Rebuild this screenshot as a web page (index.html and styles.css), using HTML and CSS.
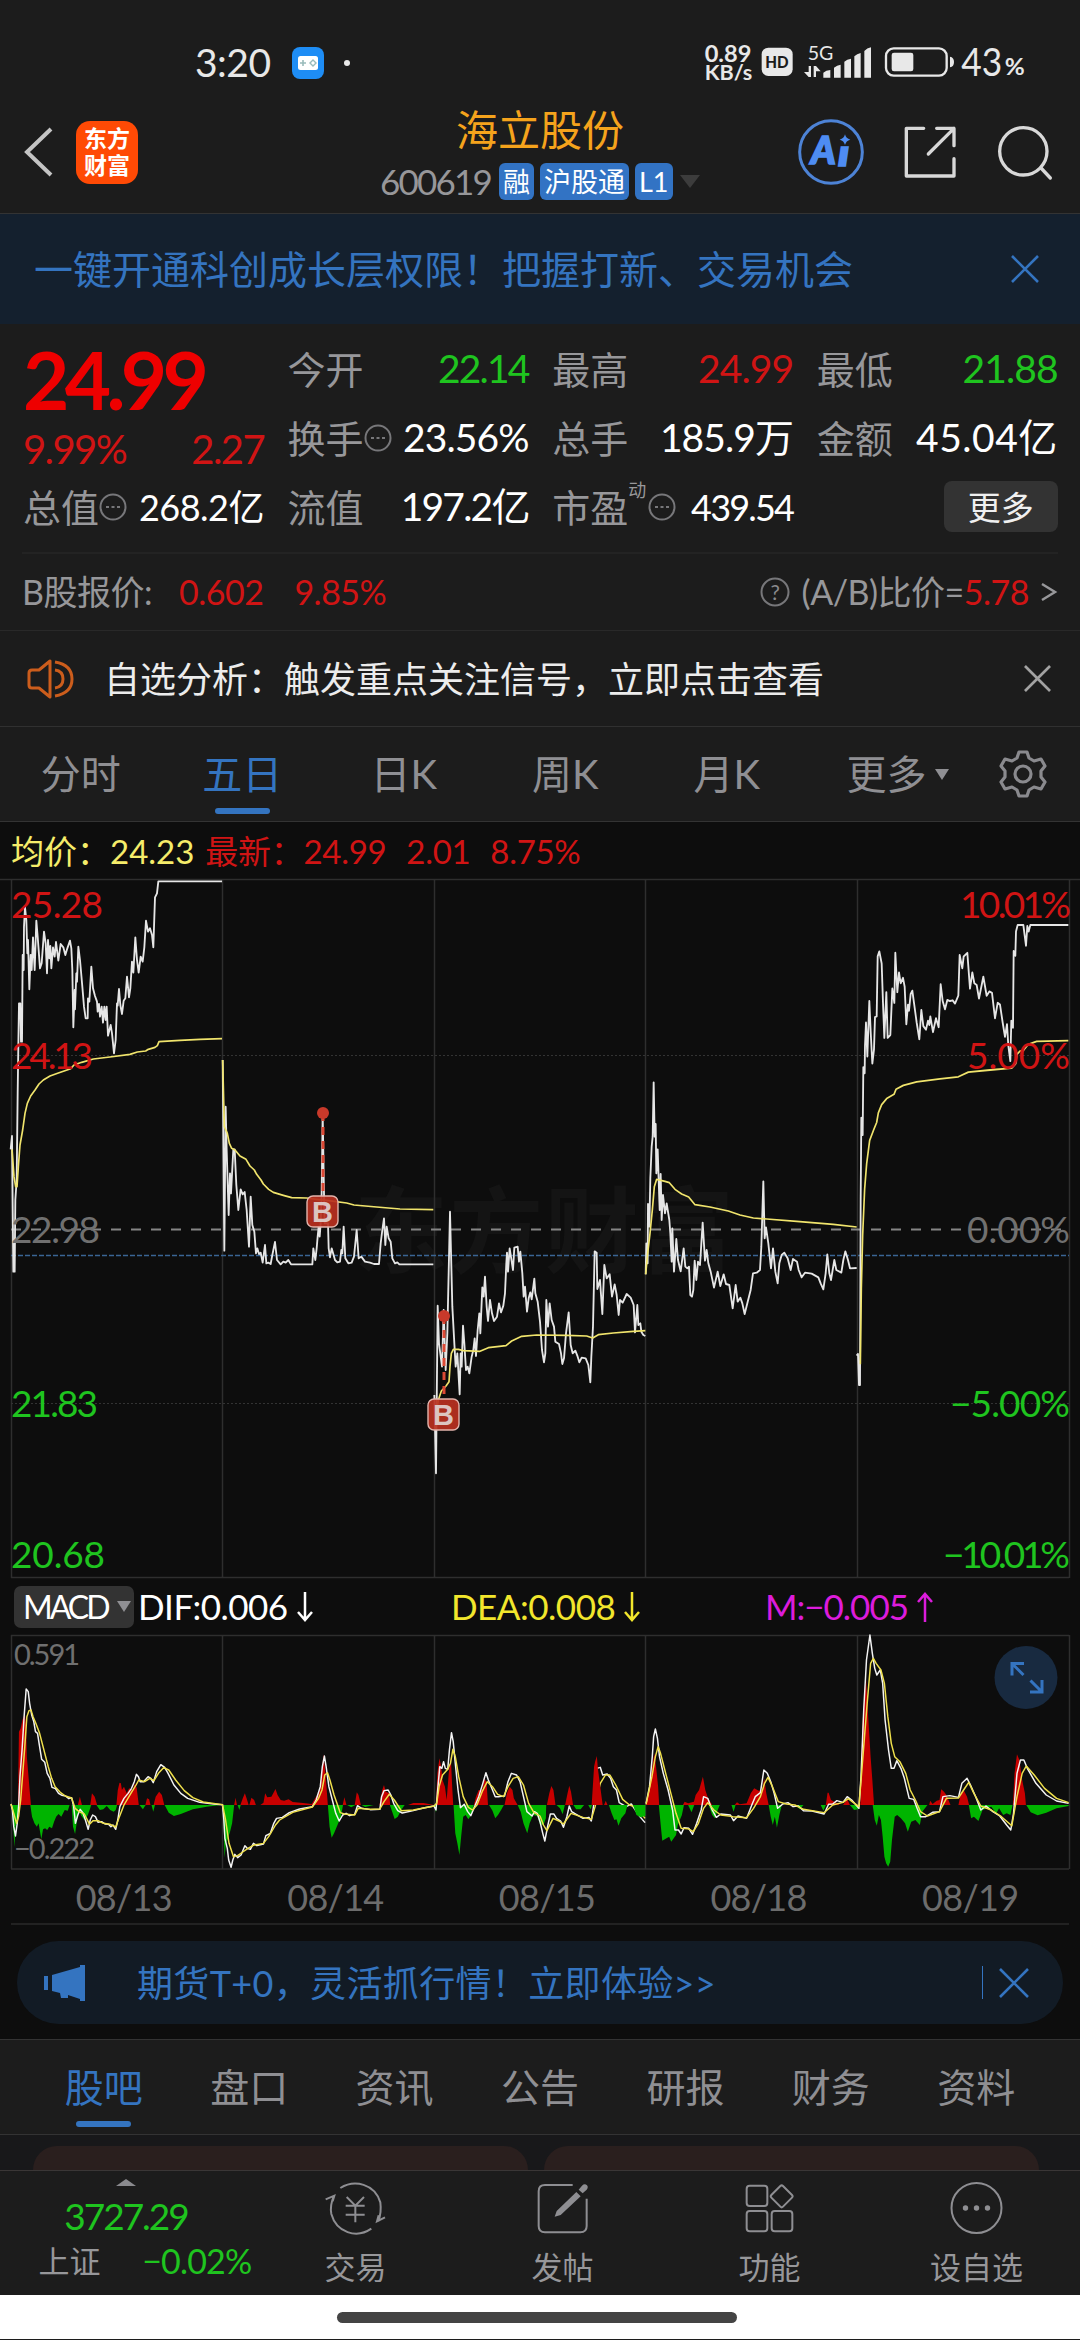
FILE: index.html
```html
<!DOCTYPE html>
<html lang="zh-CN">
<head>
<meta charset="utf-8">
<title>海立股份 600619</title>
<link rel="stylesheet" href="styles.css">
</head>
<body>
<header class="top">
  <div class="status">
    <span class="clock">3:20</span>
    <svg class="game" viewBox="0 0 32 32"><rect width="32" height="32" rx="8" fill="#1e8df5"/><rect x="6" y="9" width="20" height="14" rx="2.5" fill="#fff"/><path d="M8 16h6M11 13v6" stroke="#9bb" stroke-width="1.6"/><path d="M21 13l3 3-3 3-3-3z" fill="none" stroke="#9bb" stroke-width="1.4"/></svg>
    <i class="dot"></i>
    <svg class="signals" viewBox="120 60 990 135" fill="#e8e8e8">
      <text x="134" y="127" font-size="66" font-weight="700" textLength="140" lengthAdjust="spacingAndGlyphs">0.89</text>
      <text x="134" y="181" font-size="60" font-weight="700" textLength="143" lengthAdjust="spacingAndGlyphs">KB/s</text>
      <rect x="305" y="83" width="93" height="85" rx="20"/>
      <text x="316" y="143" font-size="49" font-weight="900" fill="#1c1c1c" textLength="70" lengthAdjust="spacingAndGlyphs">HD</text>
      <text x="443" y="120" font-size="60" textLength="77" lengthAdjust="spacingAndGlyphs">5G</text>
      <path d="M446 138h7v33h-7l-14-15h14zM461 171v-33h7l14 16h-14v17zM490 173v-15q8-8 21-8v23zM522 173v-30q9-8 20-9v39zM553 173v-48q8-8 20-9v57zM583 173v-64q8-8 19-10v74zM613 173v-80q8-9 20-11v91z"/>
      <rect x="678" y="85" width="182" height="82" rx="23" fill="none" stroke="#e8e8e8" stroke-width="7"/>
      <rect x="695" y="98" width="65" height="56" rx="7"/>
      <path d="M870 110q12 2 12 16t-12 16z"/>
      <text x="904" y="168" font-size="115" textLength="123" lengthAdjust="spacingAndGlyphs">43</text>
      <text x="1034" y="164" font-size="67" font-weight="700" textLength="60" lengthAdjust="spacingAndGlyphs">%</text>
    </svg>
  </div>
  <div class="nav">
    <svg class="back" viewBox="0 0 32 52"><path d="M28 3L4 26l24 23" fill="none" stroke="#c4c4c4" stroke-width="4"/></svg>
    <div class="logo">东方<br>财富</div>
    <div class="title">
      <h1>海立股份</h1>
      <div class="sub"><span class="code">600619</span><b>融</b><b>沪股通</b><b>L1</b><i></i></div>
    </div>
    <svg class="ai" viewBox="408 291 210 210"><circle cx="513" cy="396" r="94" fill="none" stroke="#4d83d6" stroke-width="9"/><g fill="#4e8cf2" stroke="#4e8cf2" stroke-width="5" font-weight="900" font-style="italic"><text x="453" y="432" font-size="112" textLength="74" lengthAdjust="spacingAndGlyphs">A</text><text x="534" y="437" font-size="108" textLength="34" lengthAdjust="spacingAndGlyphs">ı</text></g><path d="M555 343q3 13 16 16-13 3-16 16-3-13-16-16 13-3 16-16z" fill="#4e8cf2"/></svg>
    <svg class="share" viewBox="720 305 180 180" fill="none" stroke="#d8d8d8" stroke-width="10" stroke-linecap="round" stroke-linejoin="round"><path d="M791 324h-52v143h143v-52M830 324h52v52M882 324l-77 77"/></svg>
    <svg class="search" viewBox="1005 300 180 180" fill="none" stroke="#d8d8d8" stroke-width="10" stroke-linecap="round"><circle cx="1090" cy="388" r="71"/><path d="M1143 438l28 30"/></svg>
  </div>
</header>

<section class="promo"><span>一键开通科创成长层权限！把握打新、交易机会</span><svg viewBox="0 0 28 28"><path d="M1 1l26 26M27 1L1 27" stroke="#3474c0" stroke-width="2.6"/></svg></section>

<section class="quote">
  <div class="grid">
    <div class="price">
      <strong>24.99</strong>
      <div class="chg"><span>9.99%</span><span>2.27</span></div>
    </div>
    <div class="cell"><label>今开</label><em class="g">22.14</em></div>
    <div class="cell"><label>最高</label><em class="r mid">24.99</em></div>
    <div class="cell"><label>最低</label><em class="g mid">21.88</em></div>
    <div class="cell"><label>换手</label><svg class="more" viewBox="0 0 28 28"><circle cx="14" cy="14" r="12.5"/><path d="M7 14h3M12.500 14h3M18 14h3"/></svg><em class="mid">23.56%</em></div>
    <div class="cell"><label>总手</label><em class="mid">185.9万</em></div>
    <div class="cell"><label>金额</label><em class="wide">45.04亿</em></div>
    <div class="cell"><label>总值</label><svg class="more" viewBox="0 0 28 28"><circle cx="14" cy="14" r="12.5"/><path d="M7 14h3M12.500 14h3M18 14h3"/></svg><em class="sm loose">268.2亿</em></div>
    <div class="cell"><label>流值</label><em>197.2亿</em></div>
    <div class="cell"><label>市盈</label><sup>动</sup><svg class="more" viewBox="0 0 28 28"><circle cx="14" cy="14" r="12.5"/><path d="M7 14h3M12.500 14h3M18 14h3"/></svg><em class="sm">439.54</em></div>
    <div class="cell"><button>更多</button></div>
  </div>
  <div class="bshare">
    <span>B股报价:</span><span class="r b1">0.602</span><span class="r b2">9.85%</span>
    <svg class="help" viewBox="0 0 30 30"><circle cx="15" cy="15" r="13.500" fill="none" stroke="#77777a" stroke-width="2"/><text x="15" y="22.500" text-anchor="middle" font-size="21" fill="#8a8a8d">?</text></svg>
    <span class="ab">(A/B)比价=<span class="r">5.78</span></span>
    <svg class="chev" viewBox="0 0 16 18"><path d="M1 1l13 8-13 8" fill="none" stroke="#97979a" stroke-width="2.500"/></svg>
  </div>
</section>

<section class="notice">
  <svg class="horn" viewBox="0 0 48 40" fill="none" stroke="#cc5d1c" stroke-width="3" stroke-linejoin="round"><path d="M23 2v36l-11-9H5q-3 0-3-3V14q0-3 3-3h7zM28 3q17 3 17 17T28 37M28 11q8 1 8 9t-8 9"/></svg>
  <span>自选分析：触发重点关注信号，立即点击查看</span>
  <svg class="x" viewBox="0 0 28 28"><path d="M1 1l26 26M27 1L1 27" stroke="#a2a2a2" stroke-width="2.800"/></svg>
</section>

<nav class="tabs periods">
  <a>分时</a><a class="on">五日</a><a>日K</a><a>周K</a><a>月K</a><a>更多<i></i></a>
  <svg class="gear" viewBox="0 0 48 48" fill="none" stroke="#8a8a8e" stroke-width="3.200" stroke-linejoin="round"><path d="M20 2h8l2 6 5 3 7-2 4 7-4 5v6l4 5-4 7-7-2-5 3-2 6h-8l-2-6-5-3-7 2-4-7 4-5v-6l-4-5 4-7 7 2 5-3z"/><circle cx="24" cy="24" r="8"/></svg>
</nav>

<section class="chart">
  <div class="legend"><span class="y">均价：24.23</span><span class="r">最新：24.99</span><span class="r">2.01</span><span class="r">8.75%</span></div>
  <svg class="plot" viewBox="0 879 1080 699">
    <text class="mark" x="354" y="1266" textLength="380">东方财富</text>
    <g class="frame"><path d="M0 879.500H1080M11 1577.500H1069M11.500 880V1578M222.500 880V1578M434.500 880V1578M645.500 880V1578M857.500 880V1578M1069.500 880V1578"/></g>
    <path d="M11 1055.500H1069M11 1403.500H1069" stroke="#333" stroke-dasharray="2 2"/>
    <path d="M11 1229.500H1069" stroke="#858585" stroke-width="1.800" stroke-dasharray="10 10"/>
    <path d="M11 1255.500H1069" stroke="#3a6594" stroke-width="1.400" stroke-dasharray="5 2"/>
    <g class="white" transform="translate(0 860) scale(.33333)">
      <polyline points="32,868 36,828 40,1235 44,1235 46,1020 50,960 53,700 55,560 57,430 61,430 63,545 66,545 68,285 71,330 72,200 75,142 79,180 82,280 84,240 88,388 92,285 95,330 99,232 104,330 109,182 113,230 120,325 125,310 132,215 137,250 141,340 144,240 148,295 151,258 154,325 159,262 164,290 168,246 175,302 182,252 190,262 196,285 202,265 210,242 214,265 217,330 220,502 224,390 225,448 229,340 231,365 235,260 240,300 247,380 252,440 257,475 263,475 264,415 268,425 274,320 279,385 285,408 291,425 293,455 297,432 300,470 305,440 309,488 313,440 317,480 320,440 324,527 332,495 336,520 342,580 347,540 351,430 353,437 357,387 361,435 366,462 371,422 376,415 381,350 387,412 391,385 396,305 400,338 406,232 411,300 416,338 422,290 428,305 433,262 438,182 444,215 450,205 456,225 460,262 465,112 471,100 475,64 666,64"/>
      <polyline points="668,600 673,1172 677,740 680,870 686,1065 690,940 693,1000 700,868 704,868 709,975 715,1050 722,988 728,1003 734,996 740,1050 747,1160 752,1010 757,1095 763,1115 768,1180 772,1165 777,1182 782,1178 788,1208 795,1155 799,1210 805,1208 812,1212 817,1185 825,1146 831,1200 842,1213 850,1205 857,1208 865,1200 873,1213 937,1213 940,1165 946,1200 950,1165 953,1130 956,1100 959,1130 962,1090 965,1000 968,760 972,1000 974,1090 984,1090 986,1165 990,1192 995,1165 1005,1200 1012,1207 1020,1205 1024,1170 1027,1180 1031,1100 1036,1195 1045,1210 1055,1208 1062,1190 1070,1110 1076,1195 1084,1190 1095,1205 1110,1208 1122,1212 1137,1212 1142,1150 1147,1110 1152,1075 1156,1155 1160,1100 1166,1135 1172,1145 1177,1195 1185,1210 1192,1207 1198,1213 1300,1213"/>
    </g>
    <g class="white" transform="translate(420 1060) scale(.33333)">
      <polyline points="43,1005 48,1240 53,737 57,850 66,920 71,750 77,930 82,820 90,455 97,740 103,850 107,920 112,880 119,1003 122,880 125,920 129,797 133,850 138,930 143,920 148,940 155,890 160,870 164,835 168,888 173,810 178,760 181,820 187,682 191,710 195,650 200,740 204,783 210,720 216,760 222,783 231,770 237,730 243,757 250,737 255,700 259,610 261,578 264,635 269,565 279,630 283,563 293,560 297,605 301,575 307,640 311,710 315,680 321,755 326,715 331,697 335,718 343,656 346,700 353,725 360,785 366,870 372,907 376,880 379,720 384,800 389,730 395,780 402,800 406,845 417,852 423,880 427,912 432,895 438,820 446,757 452,855 458,880 466,872 473,890 478,907 485,893 497,895 505,915 511,967 514,890 519,800 524,574 530,578 532,687 540,660 547,762 553,615 560,655 569,643 576,710 584,673 590,705 596,765 600,720 608,728 620,702 632,713 641,735 645,817 652,735 655,795 661,790 664,815 670,825 676,828"/>
      <polyline points="677,643 679,550 683,610 684,432 688,500 691,355 695,260 698,230 701,67 704,230 707,192 709,340 713,268 719,450 722,342 725,480 729,405 735,460 740,430 748,480 751,520 755,605 757,505 762,635 769,537 774,600 782,634 791,565 796,620 802,625 807,620 811,705 816,710 820,690 824,602 829,660 834,605 840,615 848,488 855,602 860,570 865,610 872,635 882,683 893,635 901,678 911,643 918,672 928,675 938,745 947,675 953,725 961,713 967,730 974,762 982,730 992,690 999,640 1010,638 1020,630 1024,560 1030,364 1034,535 1038,502 1045,550 1053,625 1059,565 1066,635 1073,670 1078,610 1085,585 1093,578 1103,595 1112,630 1119,597 1131,605 1136,630 1145,652 1155,638 1175,641 1195,652 1202,670 1210,688 1217,640 1222,583 1228,640 1233,660 1243,600 1249,630 1264,638 1270,600 1276,574 1284,600 1290,625 1310,624"/>
    </g>
    <g class="white" transform="translate(640 860) scale(.33333 .35714)">
      <polyline points="650,1388 654,1383 657,1470 660,1470 662,950 664,722 668,770 670,580 674,597 675,520 678,455 682,550 688,395 692,480 697,570 702,530 705,440 710,438 713,270 718,256 725,290 729,400 733,498 739,370 743,498 751,490 757,360 763,400 766,260 772,370 777,315 782,345 789,330 794,355 799,460 804,405 807,422 812,375 817,366 822,400 830,455 838,502 844,420 850,465 858,475 864,450 868,462 871,438 879,482 888,443 896,468 902,348 908,395 915,418 922,392 930,395 938,393 945,402 955,380 959,266 967,303 971,270 982,260 990,360 997,315 1003,345 1010,350 1017,388 1030,327 1040,380 1048,368 1056,372 1065,443 1073,400 1080,405 1088,455 1095,495 1101,460 1105,520 1111,563 1114,450 1119,470 1121,255 1126,268 1128,200 1133,182 1150,182 1158,240 1162,185 1166,200 1171,182 1285,182"/>
    </g>
    <g class="avg" transform="translate(0 860) scale(.33333)">
      <polyline points="36,868 42,950 47,980 51,980 55,920 60,855 68,810 75,760 82,730 92,708 105,690 117,672 130,660 150,648 175,639 212,626 222,615 245,607 280,597 330,591 390,583 412,576 437,573 445,568 465,562 472,557 477,545 540,541 600,538 666,536"/>
      <polyline points="668,600 673,800 682,820 688,850 695,865 705,870 720,888 738,898 750,918 763,930 770,943 783,960 790,972 806,988 820,997 850,1006 875,1013 920,1014 950,1018 985,1022 1040,1029 1062,1035 1130,1041 1200,1047 1300,1049"/>
    </g>
    <g class="avg" transform="translate(420 1060) scale(.33333)">
      <polyline points="46,1080 55,1020 64,993 78,978 87,965 90,920 94,880 100,868 115,868 130,872 180,874 205,863 258,857 275,843 305,829 350,825 440,826 500,828 518,834 535,824 580,819 640,814 676,812"/>
      <polyline points="677,643 683,580 690,520 697,450 703,380 710,358 735,364 748,368 765,388 785,402 806,411 825,434 870,441 925,453 960,465 1000,474 1040,477 1130,484 1240,493 1310,501"/>
    </g>
    <g class="avg" transform="translate(640 860) scale(.33333 .35714)">
      <polyline points="661,1412 664,1200 668,1050 674,920 680,850 689,785 700,758 710,735 715,708 725,685 740,668 762,656 768,642 790,631 830,621 900,613 955,607 985,594 1050,588 1115,583 1127,570 1130,545 1140,535 1150,533 1165,516 1190,508 1285,506"/>
    </g>
    <g class="buy">
      <path d="M323 1113V1195M444 1316V1396"/><circle cx="323" cy="1113" r="6"/><circle cx="444" cy="1316" r="6"/>
      <rect x="307" y="1196" width="31" height="31" rx="6"/><rect x="428" y="1399" width="31" height="31" rx="6"/>
      <text x="322.500" y="1222">B</text><text x="443.500" y="1425">B</text>
    </g>
    <g class="axis">
      <text class="r" x="11" y="918" textLength="92">25.28</text><text class="r" x="11" y="1069" textLength="82">24.13</text>
      <text class="n" x="11" y="1243" textLength="89">22.98</text><text class="g" x="11" y="1417" textLength="87">21.83</text><text class="g" x="11" y="1568" textLength="94">20.68</text>
      <text class="r" x="960" y="918" textLength="111">10.01%</text><text class="r" x="967" y="1069" textLength="103">5.00%</text>
      <text class="n" x="967" y="1243" textLength="103">0.00%</text><text class="g" x="950" y="1417" textLength="120">−5.00%</text><text class="g" x="943" y="1568" textLength="127">−10.01%</text>
    </g>
  </svg>
  <div class="indicator">
    <span class="pick">MACD<i></i></span>
    <span class="dif">DIF:0.006<svg viewBox="0 0 16 30"><path d="M8 0v28M1 20l7 8 7-8"/></svg></span>
    <span class="dea">DEA:0.008<svg viewBox="0 0 16 30"><path d="M8 0v28M1 20l7 8 7-8"/></svg></span>
    <span class="m">M:−0.005<svg viewBox="0 0 16 30"><path d="M8 30V2M1 10l7-8 7 8"/></svg></span>
  </div>
  <svg class="macd" viewBox="0 1635 1080 235">
    <g class="frame"><path d="M11 1635.500H1069M11 1869H1069M11.500 1635V1869M222.500 1635V1869M434.500 1635V1869M645.500 1635V1869M857.500 1635V1869M1069.500 1635V1869"/></g>
    <g transform="translate(0 1560) scale(.34439 .33333)">
      <path class="up" d="M52,735 55,515 60,505 65,480 72,462 76,500 78,590 82,640 86,690 90,735zM226,735 232,710 238,735zM262,735 267,700 275,710 282,735zM338,735 342,690 347,668 351,670 354,690 360,680 368,700 375,685 385,690 392,670 397,685 403,735zM422,735 427,715 433,718 437,735zM446,735 452,710 462,695 470,705 477,735zM680,735 684,713 688,735zM698,735 705,715 711,700 716,715 722,735zM724,735 730,713 738,720 743,735zM756,735 765,728 770,700 776,712 788,710 800,687 806,705 815,720 825,722 838,718 850,726 880,729 905,732 915,715 925,700 932,670 939,583 945,640 952,735zM995,735 1000,712 1006,735zM1030,735 1036,697 1041,705 1048,735zM1102,735 1110,690 1115,675 1120,695 1130,700 1133,735zM1185,735 1200,729 1230,729 1260,735zM1266,735 1270,640 1276,595 1281,620 1285,660 1292,680 1297,720 1303,640 1309,590 1313,680 1316,735zM1376,735 1382,710 1390,690 1400,690 1407,655 1413,670 1417,735zM1465,735 1472,700 1480,680 1488,690 1492,715 1503,735z"/>
      <path class="dn" d="M34,735 38,790 42,862 45,800 52,770 54,735zM88,735 93,770 100,790 107,800 112,790 120,838 125,808 131,805 137,810 143,800 151,805 157,785 163,770 170,762 178,770 188,750 197,752 202,735zM208,735 212,800 218,822 224,780 228,745 235,765 245,780 255,765 262,745 265,735zM280,735 290,750 300,748 310,738 320,750 330,755 336,750 340,735zM405,735 415,748 423,735zM440,735 445,755 450,735zM478,735 490,758 505,768 525,762 560,748 600,740 640,735zM648,735 652,893 656,850 660,840 668,815 674,790 680,735zM690,735 695,750 699,735zM952,735 957,800 963,833 970,820 980,795 990,770 996,735zM1008,735 1020,742 1032,735zM1050,735 1060,741 1085,735zM1132,735 1137,750 1146,777 1155,770 1165,750 1175,735zM1262,735 1266,758 1268,735zM1317,735 1322,820 1328,850 1334,885 1339,830 1345,770 1352,765 1360,778 1368,765 1376,735zM1420,735 1430,752 1438,775 1446,765 1455,750 1463,735zM1503,735 1512,755 1520,790 1531,820 1538,790 1548,765 1560,768 1568,792 1578,795 1585,775 1586,735z"/>
      <polyline class="w" points="32,732 36,750 40,800 45,828 50,790 54,740 58,650 64,570 70,470 76,387 82,395 86,430 92,465 98,485 103,515 109,520 115,560 121,598 130,607 137,640 145,655 151,682 161,686 170,700 180,706 190,708 200,716 208,713 214,740 219,790 226,765 233,748 240,757 248,780 256,808 262,780 269,765 277,770 285,787 295,785 305,792 315,793 322,800 328,795 336,808 342,780 348,740 360,715 372,700 382,685 390,665 396,643 402,650 407,665 417,665 430,650 438,655 445,668 455,635 467,614 478,622 488,640 505,675 525,700 545,715 580,727 620,732 646,734 650,780 653,835 660,865 664,900 671,922 676,900 682,883 690,893 700,885 711,857 718,865 727,868 736,850 746,857 765,852 772,827 785,820 795,790 803,775 820,772 840,758 870,747 907,740 918,720 930,680 936,620 942,588 947,620 955,680 965,720 975,760 985,783 995,765 1005,760 1015,767 1030,763 1038,737 1050,745 1075,749 1103,748 1108,710 1115,692 1127,690 1135,705 1143,730 1155,752 1168,759 1200,752 1230,744 1260,738 1266,750 1270,700 1277,620 1283,625 1288,605 1293,625 1300,628 1305,570 1311,518 1316,545 1322,610 1330,690 1337,743 1348,733 1358,755 1367,767 1378,740 1390,710 1402,670 1411,638 1418,660 1428,685 1438,710 1450,710 1465,708 1475,665 1485,640 1500,645 1510,665 1520,710 1530,755 1545,768 1552,755 1560,760 1568,785 1576,820 1582,843 1590,800 1598,762 1608,762 1616,775 1628,783 1636,802 1646,770 1653,738 1660,755 1673,763 1693,775 1710,772 1717,783 1726,720 1733,625 1743,622 1750,645 1763,642 1773,655 1781,680 1790,690 1798,728 1818,740 1833,732 1845,750 1858,770 1873,788"/>
      <polyline class="y" points="32,732 40,760 48,790 54,770 60,720 66,640 72,560 78,470 84,452 90,450 96,470 104,490 115,520 125,560 140,620 150,655 160,680 175,697 190,708 208,714 218,745 230,755 245,762 260,793 270,782 285,782 300,790 320,793 336,801 345,775 360,735 380,700 395,675 403,660 420,665 435,655 447,662 460,640 475,623 490,630 510,660 535,692 560,713 590,726 646,734 655,780 665,850 678,890 690,887 705,876 720,865 738,855 765,850 780,830 800,795 812,780 850,757 907,741 925,715 935,690 943,645 951,638 958,660 970,705 988,758 1000,762 1030,765 1040,745 1075,748 1103,747 1115,725 1130,703 1145,720 1165,752 1200,750 1260,738 1268,730 1275,680 1285,645 1300,628 1308,610 1315,568 1322,590 1332,650 1345,710 1360,742 1372,750 1385,735 1400,695 1415,665 1430,680 1445,703 1462,710 1475,680 1490,655 1505,650 1520,675 1535,730 1550,757 1568,768 1578,795 1588,812 1606,775 1623,783 1636,792 1658,760 1693,772 1717,778 1728,740 1743,670 1758,645 1771,645 1788,675 1808,718 1828,735 1848,742 1873,775"/>
    </g>
    <g transform="translate(540 1560) scale(.34439 .33333)">
      <path class="up" d="M20,735 27,700 33,678 39,690 45,735zM73,735 80,700 85,677 90,695 96,735zM150,735 157,620 160,605 165,588 168,625 175,680 182,735zM186,735 191,722 196,735zM308,735 318,680 326,620 332,580 337,620 343,680 346,735zM415,735 420,725 430,730 447,725 452,705 462,690 473,650 480,690 488,715 500,735zM565,735 572,727 580,733 600,730 612,700 622,685 635,692 645,690 651,655 657,700 664,735zM830,735 835,698 838,698 845,720 860,728 870,735zM880,735 892,718 900,735zM930,735 936,500 942,400 947,360 953,470 960,590 965,660 970,735zM1130,735 1133,722 1140,732 1152,722 1160,720 1165,688 1173,695 1180,705 1192,735zM1215,735 1222,700 1230,690 1240,710 1246,735zM1373,735 1378,640 1385,583 1392,600 1400,660 1408,700 1411,735z"/>
      <path class="dn" d="M48,735 58,745 66,763 72,735zM97,735 105,748 118,748 128,735zM140,735 147,748 151,735zM200,735 208,760 216,780 222,778 228,797 236,775 248,760 254,735zM270,735 280,765 292,772 306,768 306,735zM345,735 350,790 355,842 375,830 381,845 395,825 400,795 412,765 418,735zM430,735 440,757 448,735zM490,735 500,765 508,775 516,750 522,735zM556,735 562,755 568,735zM664,735 670,770 676,795 682,770 688,803 695,765 702,735zM815,735 823,752 830,735zM740,735 755,748 765,735zM900,735 912,750 924,748 926,735zM966,735 972,780 978,797 984,765 990,780 995,830 1000,890 1005,910 1011,920 1017,905 1022,840 1030,770 1037,765 1048,775 1060,790 1068,815 1078,785 1090,780 1103,795 1110,755 1125,735zM1245,735 1252,775 1260,770 1273,783 1285,750 1310,740 1325,760 1333,745 1345,765 1355,760 1366,765 1372,735zM1412,735 1425,757 1445,766 1470,758 1500,745 1535,738 1535,735z"/>
      <polyline class="w" points="308,730 318,680 326,590 330,530 335,507 341,535 347,590 358,640 372,690 385,750 392,810 402,810 410,822 418,803 432,805 443,823 455,790 468,750 475,710 487,715 500,750 512,772 525,762 553,765 562,782 575,768 600,775 615,735 625,710 640,698 650,630 660,640 670,665 680,700 690,745 705,732 720,728 735,740 750,738 765,752 790,753 825,762 838,733 850,732 862,722 880,727 892,710 905,720 926,745 932,650 940,450 948,300 958,225 965,280 972,325 978,345 988,330 995,370 1002,480 1012,570 1020,625 1028,625 1036,602 1048,625 1058,655 1072,715 1085,718 1095,745 1105,770 1120,770 1140,757 1160,755 1170,710 1190,707 1215,712 1225,670 1240,655 1250,675 1265,710 1280,750 1295,738 1315,755 1335,768 1355,795 1367,810 1375,760 1385,640 1395,600 1405,600 1415,625 1440,670 1470,705 1500,723 1535,730"/>
      <polyline class="y" points="308,733 325,650 335,590 343,560 350,580 365,640 380,700 395,760 410,805 430,806 445,815 460,790 475,745 487,728 505,750 525,765 560,770 600,773 620,745 640,710 652,670 662,652 675,680 692,725 715,732 740,735 765,748 825,758 850,735 880,727 895,716 926,740 940,560 950,430 960,310 968,295 976,310 990,330 1000,370 1010,470 1020,550 1030,590 1045,605 1062,640 1075,690 1090,720 1105,755 1125,768 1160,755 1180,715 1215,714 1230,690 1245,667 1260,700 1280,738 1310,750 1340,770 1370,797 1385,710 1400,640 1412,618 1435,645 1465,685 1500,715 1535,728"/>
    </g>
    <g class="small"><text x="14" y="1665" textLength="66">0.591</text><text x="14" y="1859" textLength="81">−0.222</text></g>
    <circle cx="1026" cy="1677.500" r="31.500" fill="#182a40"/>
    <path d="M1012 1675.500v-12h12M1012.500 1664l11 11M1042 1680v12h-12M1041.500 1691.500l-11-11" fill="none" stroke="#3474c0" stroke-width="3"/>
  </svg>
  <div class="dates"><span>08/13</span><span>08/14</span><span>08/15</span><span>08/18</span><span>08/19</span></div>
  <div class="ad">
    <svg class="mega" viewBox="0 0 42 36" fill="#3474c0"><path d="M0 11h4v14H0zM8 10L36 2V0h5v36h-5v-2l-12-4v3h-7l-1-5-8-2z"/></svg>
    <span>期货T+0，灵活抓行情！立即体验&gt;&gt;</span>
    <i class="bar"></i>
    <svg class="x" viewBox="0 0 30 30"><path d="M1 1l28 28M29 1L1 29" stroke="#3474c0" stroke-width="2.600"/></svg>
  </div>
</section>

<nav class="tabs info"><a class="on">股吧</a><a>盘口</a><a>资讯</a><a>公告</a><a>研报</a><a>财务</a><a>资料</a></nav>
<section class="cards"><div></div><div></div></section>

<footer class="dock">
  <div class="index"><i></i><strong>3727.29</strong><p><span>上证</span><em>−0.02%</em></p></div>
  <div class="item"><svg viewBox="70 22 195 180" fill="none" stroke="#8e8e92" stroke-width="6"><path d="M122 52C165 25 225 40 242 95Q246 125 236 152M256 140l-24 12 5-18M215 174C170 205 110 185 95 130Q90 105 103 75M78 86l26-11-5 17M141 79l26 26 26-26M167 105v50M138 105h57M138 132h57"/></svg><span>交易</span></div>
  <div class="item"><svg viewBox="688 22 195 180" fill="none" stroke="#8e8e92" stroke-width="6"><path d="M816 43h-83q-19 0-19 19v104q0 19 19 19h106q19 0 19-19V84"/><path d="M762 138l6-17 59-57 13 13-60 56zM834 57l10-12q8-8 15-1 5 6-1 13l-12 11z" fill="#8e8e92" stroke="none"/></svg><span>发帖</span></div>
  <div class="item"><svg viewBox="1310 22 195 180" fill="none" stroke="#8e8e92" stroke-width="6"><rect x="1339" y="45" width="62" height="61" rx="9"/><rect x="1339" y="121" width="62" height="61" rx="9"/><rect x="1414" y="121" width="62" height="61" rx="9"/><path d="M1440 46q4-4 8 0l27 27q4 4 0 8l-27 27q-4 4-8 0l-27-27q-4-4 0-8z"/></svg><span>功能</span></div>
  <div class="item"><svg viewBox="-32.500 -30 65 60" fill="none" stroke="#8e8e92" stroke-width="2"><circle r="25"/><g fill="#8e8e92" stroke="none"><circle cx="-11" r="2.700"/><circle r="2.700"/><circle cx="11" r="2.700"/></g></svg><span>设自选</span></div>
</footer>
<div class="home"><i></i></div>
</body>
</html>
```
FILE: styles.css
```css
* { box-sizing: border-box; margin: 0; }
body { width: 1080px; height: 2340px; overflow: hidden; background: #1c1c1c; color: #97979a; font-family: Lato, "Noto Sans CJK SC", sans-serif; font-size: 38px; line-height: 1; }
svg { display: block; flex: none; overflow: visible; }
i, em { font-style: normal; }
span, label, a { white-space: nowrap; }
.r { color: #d01414; fill: #d01414; }
.g { color: #1fc41f; fill: #1fc41f; }
.n { fill: #707070; }

.top { height: 214px; border-bottom: 1px solid #333; }
.status { display: flex; align-items: center; height: 85px; padding: 40px 50px 0 195px; }
.clock { width: 97px; font-size: 39px; letter-spacing: -.5px; color: #e8e8e8; }
.game { width: 32px; height: 32px; }
.dot { width: 6px; height: 6px; margin-left: 20px; border-radius: 50%; background: #e8e8e8; }
.signals { width: 330px; height: 45px; margin-left: auto; }
.nav { display: flex; align-items: center; height: 128px; padding: 6px 25px 0 23px; }
.back { width: 32px; height: 52px; }
.logo { display: grid; place-content: center; width: 62px; height: 63px; margin-left: 21px; border-radius: 14px; background: #ff4a05; color: #fff; font-size: 23px; line-height: 27px; font-weight: 700; }
.title { display: flex; flex-direction: column; align-items: center; width: 404px; margin-left: 200px; }
.title h1 { font-size: 42px; line-height: 52px; font-weight: 400; color: #f5a31c; }
.sub { display: flex; align-items: center; gap: 6px; margin-top: 7px; width: 320px; }
.code { flex: none; font-size: 35px; letter-spacing: -1.800px; width: 113px; }
.sub b { display: grid; flex: none; place-content: center; height: 37px; padding: 0 4px; border-radius: 6px; background: #3273c4; color: #fff; font-size: 27px; font-weight: 400; white-space: nowrap; }
.sub i { border: 10px solid transparent; border-top: 13px solid #3c3c3c; border-bottom: 0; margin-left: 1px; }
.ai { width: 70px; height: 70px; margin-left: 54px; }
.share { width: 60px; height: 60px; margin-left: auto; }
.search { width: 60px; height: 60px; margin-left: 35px; }

.promo { display: flex; align-items: center; justify-content: space-between; height: 110px; padding: 0 41px 0 34px; background: #14202e; color: #3474c0; font-size: 39px; }
.promo svg { width: 28px; height: 28px; }

.quote { height: 306px; padding: 0 22px; }
.grid { display: grid; grid-template-columns: repeat(4, 241px); grid-template-rows: repeat(3, 69px); column-gap: 23.600px; height: 230px; padding: 10px 0 0 1px; border-bottom: 2px solid #232323; }
.price { grid-row: span 2; display: flex; flex-direction: column; }
.price strong { font-size: 80px; line-height: 80px; margin-top: 5px; letter-spacing: -4.700px; color: #ee0000; }
.chg { display: flex; justify-content: space-between; margin-top: 10px; font-size: 40px; letter-spacing: -1.600px; color: #d01414; }
.cell { display: flex; align-items: center; height: 69px; }
.cell em { margin-left: auto; font-size: 39px; letter-spacing: -1.800px; color: #fff; white-space: nowrap; }
.cell em.r { color: #d01414; }
.cell em.g { color: #1fc41f; }
.cell em.mid { letter-spacing: -.900px; }
.cell em.wide { letter-spacing: .500px; }
.cell em.sm { font-size: 36px; }
.cell em.loose { letter-spacing: -.500px; }
.more { width: 28px; height: 28px; fill: none; stroke: #77777a; stroke-width: 2; }
.cell sup { align-self: flex-start; margin-top: 9px; font-size: 18px; line-height: 18px; width: 20px; }
.cell button { width: 114px; height: 51px; margin-left: auto; border: 0; border-radius: 8px; background: #333; color: #f0f0f0; font: 33px/1 "Noto Sans CJK SC", sans-serif; }
.bshare { display: flex; align-items: center; height: 76px; font-size: 34px; letter-spacing: -.500px; }
.b1 { margin-left: 27px; }
.b2 { margin-left: 31px; }
.help { width: 30px; height: 30px; margin-left: auto; }
.ab { margin: 0 12px 0 12px; }
.chev { width: 16px; height: 18px; margin-right: 1px; }

.notice { display: flex; align-items: center; height: 97px; padding: 0 29px 0 27px; border-top: 1px solid #292929; border-bottom: 1px solid #303030; color: #ececec; font-size: 36px; }
.horn { width: 48px; height: 40px; margin-right: 29px; }
.notice .x { width: 27px; height: 27px; margin-left: auto; }

.tabs { display: flex; height: 95px; border-bottom: 1px solid #333; font-size: 40px; color: #8f8f93; }
.tabs a { position: relative; display: flex; align-items: center; justify-content: center; height: 94px; }
.tabs .on { color: #3474c0; }
.tabs .on::after { content: ""; position: absolute; bottom: 7px; width: 55px; height: 6px; border-radius: 3px; background: #3474c0; }
.periods { align-items: center; padding-right: 33px; }
.periods a { width: 161.500px; }
.periods a:nth-child(6) { width: 180px; }
.periods i { margin-left: 8px; border: 7px solid transparent; border-top: 11px solid #8f8f93; border-bottom: 0; }
.gear { width: 48px; height: 48px; margin-left: auto; }

.chart { background: #0d0d0d; height: 1218px; border-bottom: 1px solid #333; }
.legend { display: flex; align-items: center; height: 57px; padding: 2px 0 0 11px; font-size: 33px; }
.legend .y { color: #f5ec6a; margin-right: 11px; }
.legend .r { margin-right: 20px; letter-spacing: -.300px; }
.plot { width: 1080px; height: 699px; }
.frame { fill: none; stroke: #2e2e2e; stroke-width: 1.500; }
.mark { font: 700 94px "Noto Sans CJK SC", sans-serif; fill: #141414; }
.white { fill: none; stroke: #e6e6e6; stroke-width: 5.500; stroke-linejoin: round; }
.avg { fill: none; stroke: #f0e46c; stroke-width: 5; stroke-linejoin: round; }
.buy path { stroke: #dc4a36; stroke-width: 3; stroke-dasharray: 8 6; }
.buy circle { fill: #c8392a; }
.buy rect { fill: #b8301f; fill-opacity: .92; stroke: #e2b4ac; stroke-width: 1.400; }
.buy text { font: 700 29px "Liberation Sans", sans-serif; fill: #dcc4c0; text-anchor: middle; }
.axis { font-size: 37px; }
.indicator { display: grid; grid-template-columns: 124px 313px 314px 300px; align-items: center; height: 57px; padding-left: 14px; font-size: 35px; letter-spacing: -.500px; }
.indicator > span { display: flex; align-items: center; }
.indicator svg { width: 16px; height: 30px; margin-left: 9px; fill: none; stroke: currentColor; stroke-width: 2.500; }
.indicator .pick { width: 120px; height: 42px; padding-left: 9px; border-radius: 7px; background: #333; color: #fff; font-size: 32px; letter-spacing: -3px; }
.pick i { margin-left: 9px; border: 7px solid transparent; border-top: 11px solid #8f8f93; border-bottom: 0; }
.dif { color: #fff; }
.dea { color: #f2e62c; }
.m { color: #dc1cdc; letter-spacing: -1px; }
.macd { width: 1080px; height: 235px; }
.up { fill: #c80000; }
.dn { fill: #00b400; }
.macd polyline { fill: none; stroke-width: 4.300; stroke-linejoin: round; }
.w { stroke: #f4f4f4; }
.macd .y { stroke: #efe04c; }
.small { font-size: 29px; fill: #707070; }
.dates { display: flex; align-items: center; height: 55px; margin: 0 11px; border-bottom: 2px solid #222; font-size: 36px; letter-spacing: -.700px; color: #6c6c6c; }
.dates span { width: 20%; padding-left: 14px; text-align: center; }
.ad { display: flex; align-items: center; height: 83px; margin: 16px 17px 0; padding: 0 34px 0 27px; border-radius: 42px; background: #121b25; color: #3474c0; font-size: 36px; letter-spacing: .350px; }
.mega { width: 42px; height: 36px; margin-right: 51px; }
.bar { width: 1px; height: 33px; margin: 0 16px 0 auto; background: #3474c0; }
.ad .x { width: 30px; height: 30px; }

.info { padding: 0 31px; }
.info a { flex: 1; font-size: 39px; }
.cards { display: flex; gap: 16px; height: 35px; padding: 11px 41px 0 33px; background: #18181a; }
.cards div { flex: 1; border-radius: 24px 24px 0 0; background: #2a1f1e; }
.dock { display: flex; height: 125px; border-top: 1px solid #3a3636; }
.index { width: 252px; display: flex; flex-direction: column; align-items: center; }
.index i { margin-top: 8px; border: 10px solid transparent; border-bottom: 7px solid #8a8a8e; border-top: 0; }
.index strong { margin-top: 11px; font-size: 37px; font-weight: 400; letter-spacing: -2px; color: #1fc41f; }
.index p { display: flex; align-items: center; justify-content: space-between; width: 213px; margin: 10px 0 0 38px; font-size: 31px; }
.index em { font-size: 34px; letter-spacing: -.800px; color: #1fc41f; }
.item { flex: 1; display: flex; flex-direction: column; align-items: center; padding-top: 7px; font-size: 31px; }
.item svg { width: 65px; height: 60px; margin-bottom: 14px; }
.home { display: flex; justify-content: center; height: 44px; padding: 17px 7px 0 0; background: #fff; }
.home i { width: 400px; height: 11px; border-radius: 6px; background: #444; }
```
